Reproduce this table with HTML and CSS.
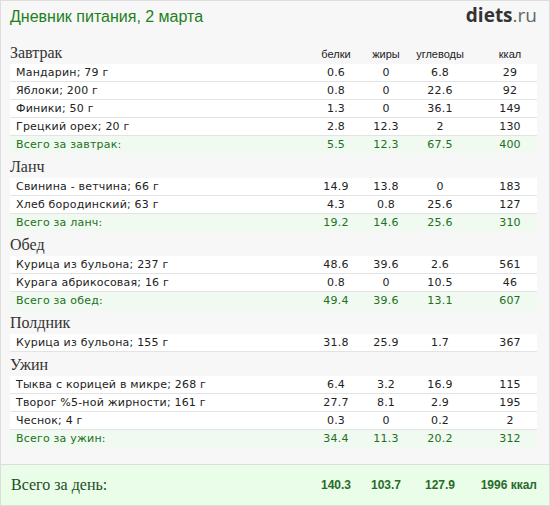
FILE: index.html
```html
<!DOCTYPE html>
<html lang="ru">
<head>
<meta charset="utf-8">
<title>Дневник питания</title>
<link rel="stylesheet" href="styles.css">
</head>
<body>
<div class="page">
  <div class="content">
    <div class="top">
      <h1 class="title">Дневник питания, 2 марта</h1>
      <div class="logo"><b>diets</b>.ru</div>
    </div>

    <section class="meal">
      <div class="meal-head">
        <h2>Завтрак</h2>
        <span class="n n1">белки</span><span class="n n2">жиры</span><span class="n n3">углеводы</span><span class="n n4">ккал</span>
      </div>
      <div class="row"><span class="name">Мандарин; 79 г</span><span class="n n1">0.6</span><span class="n n2">0</span><span class="n n3">6.8</span><span class="n n4">29</span></div>
      <div class="row"><span class="name">Яблоки; 200 г</span><span class="n n1">0.8</span><span class="n n2">0</span><span class="n n3">22.6</span><span class="n n4">92</span></div>
      <div class="row"><span class="name">Финики; 50 г</span><span class="n n1">1.3</span><span class="n n2">0</span><span class="n n3">36.1</span><span class="n n4">149</span></div>
      <div class="row"><span class="name">Грецкий орех; 20 г</span><span class="n n1">2.8</span><span class="n n2">12.3</span><span class="n n3">2</span><span class="n n4">130</span></div>
      <div class="row total"><span class="name">Всего за завтрак:</span><span class="n n1">5.5</span><span class="n n2">12.3</span><span class="n n3">67.5</span><span class="n n4">400</span></div>
    </section>

    <section class="meal">
      <div class="meal-head"><h2>Ланч</h2></div>
      <div class="row"><span class="name">Свинина - ветчина; 66 г</span><span class="n n1">14.9</span><span class="n n2">13.8</span><span class="n n3">0</span><span class="n n4">183</span></div>
      <div class="row"><span class="name">Хлеб бородинский; 63 г</span><span class="n n1">4.3</span><span class="n n2">0.8</span><span class="n n3">25.6</span><span class="n n4">127</span></div>
      <div class="row total"><span class="name">Всего за ланч:</span><span class="n n1">19.2</span><span class="n n2">14.6</span><span class="n n3">25.6</span><span class="n n4">310</span></div>
    </section>

    <section class="meal">
      <div class="meal-head"><h2>Обед</h2></div>
      <div class="row"><span class="name">Курица из бульона; 237 г</span><span class="n n1">48.6</span><span class="n n2">39.6</span><span class="n n3">2.6</span><span class="n n4">561</span></div>
      <div class="row"><span class="name">Курага абрикосовая; 16 г</span><span class="n n1">0.8</span><span class="n n2">0</span><span class="n n3">10.5</span><span class="n n4">46</span></div>
      <div class="row total"><span class="name">Всего за обед:</span><span class="n n1">49.4</span><span class="n n2">39.6</span><span class="n n3">13.1</span><span class="n n4">607</span></div>
    </section>

    <section class="meal">
      <div class="meal-head"><h2>Полдник</h2></div>
      <div class="row"><span class="name">Курица из бульона; 155 г</span><span class="n n1">31.8</span><span class="n n2">25.9</span><span class="n n3">1.7</span><span class="n n4">367</span></div>
    </section>

    <section class="meal">
      <div class="meal-head"><h2>Ужин</h2></div>
      <div class="row"><span class="name">Тыква с корицей в микре; 268 г</span><span class="n n1">6.4</span><span class="n n2">3.2</span><span class="n n3">16.9</span><span class="n n4">115</span></div>
      <div class="row"><span class="name">Творог %5-ной жирности; 161 г</span><span class="n n1">27.7</span><span class="n n2">8.1</span><span class="n n3">2.9</span><span class="n n4">195</span></div>
      <div class="row"><span class="name">Чеснок; 4 г</span><span class="n n1">0.3</span><span class="n n2">0</span><span class="n n3">0.2</span><span class="n n4">2</span></div>
      <div class="row total"><span class="name">Всего за ужин:</span><span class="n n1">34.4</span><span class="n n2">11.3</span><span class="n n3">20.2</span><span class="n n4">312</span></div>
    </section>
  </div>

  <div class="day">
    <span class="day-label">Всего за день:</span>
    <span class="n n1">140.3</span><span class="n n2">103.7</span><span class="n n3">127.9</span><span class="n n4 kcal">1996 ккал</span>
  </div>
</div>
</body>
</html>
```

FILE: styles.css
```css
body {
  margin: 0;
  font-family: "DejaVu Sans", Verdana, sans-serif;
}

.page {
  width: 550px;
  height: 506px;
  box-sizing: border-box;
  border: 1px solid #dddddd;
  background: #f7f7f7;
  display: flex;
  flex-direction: column;
}

.content {
  flex: 1;
  padding: 0 12px 0 9px;
}

.top {
  height: 39px;
  display: flex;
  justify-content: space-between;
  align-items: flex-start;
}

.title {
  margin: 0;
  padding-top: 8px;
  font: normal 16px/16px "Liberation Sans", Arial, sans-serif;
  color: #1e801e;
}

.logo {
  padding-top: 4px;
  font: 19px/20px "Open Sans", "Liberation Sans", sans-serif;
  color: #666666;
}

.logo b {
  color: #333333;
  font-weight: 700;
}

.meal-head {
  height: 24px;
  box-sizing: border-box;
  display: flex;
  align-items: baseline;
  padding: 3px 2px 0 0;
}

.meal-head h2 {
  flex: 1;
  margin: 0;
  font: normal 16px/20px "Liberation Serif", "Times New Roman", serif;
  color: #333333;
}

.meal-head .n {
  font: 11px/20px "Liberation Sans", Arial, sans-serif;
  color: #222222;
}

.row {
  height: 18px;
  box-sizing: border-box;
  display: flex;
  align-items: center;
  padding: 0 2px 0 6px;
  background: #ffffff;
  border-bottom: 1px solid #e3e3e3;
  font-size: 11px;
  line-height: 17px;
  letter-spacing: 0.2px;
  color: #222222;
}

.row .name {
  flex: 1;
  white-space: nowrap;
}

.row.total {
  background: #f0faf0;
  border-bottom-color: #f0faf0;
  color: #226f22;
}

.n {
  width: 50px;
  flex: none;
  text-align: center;
  white-space: nowrap;
}

.n3 {
  margin-left: 4px;
}

.n4 {
  margin-left: 20px;
}

.day {
  height: 41px;
  box-sizing: border-box;
  display: flex;
  align-items: center;
  padding: 0 12px 0 9px;
  border-top: 1px solid #dddddd;
  background: #e9fde9;
}

.day-label {
  flex: 1;
  padding-left: 1px;
  font: 16px/20px "Liberation Serif", "Times New Roman", serif;
  color: #1c4d1c;
}

.day .n {
  font: bold 12px/20px "Liberation Sans", Arial, sans-serif;
  color: #2b6a2b;
}

.day .kcal {
  width: 58px;
  margin-left: 14px;
  text-align: right;
}
```
